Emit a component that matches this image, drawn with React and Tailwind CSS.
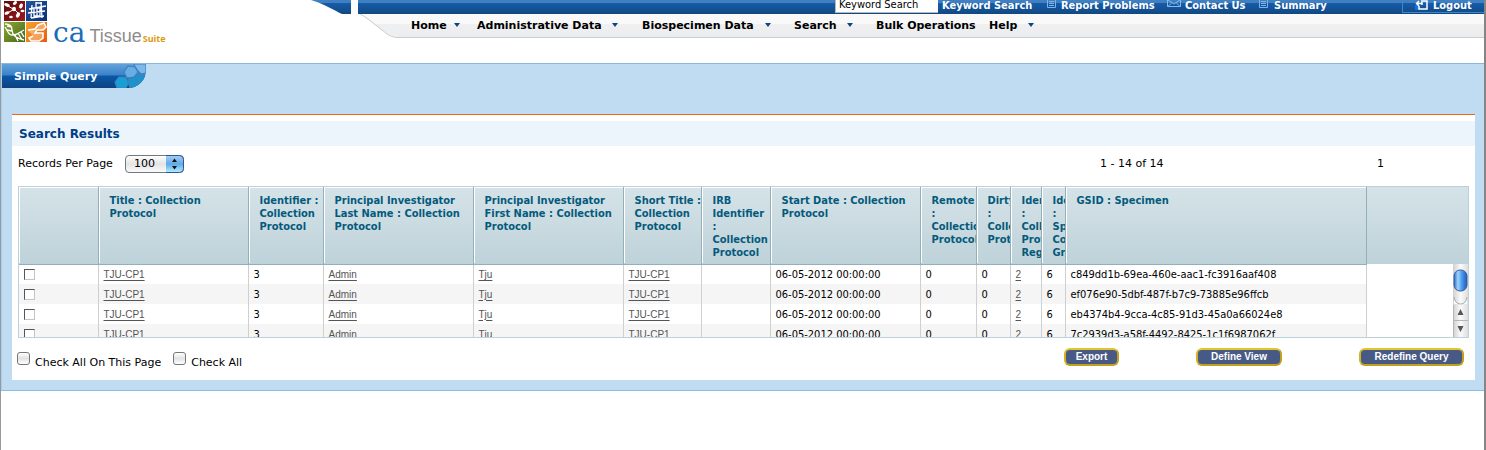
import React from "react";

const columns = [
  { label: "", width: "w-[79px]" },
  { label: "Title : Collection Protocol", width: "w-[150px]" },
  { label: "Identifier : Collection Protocol", width: "w-[75px]" },
  { label: "Principal Investigator Last Name : Collection Protocol", width: "w-[150px]" },
  { label: "Principal Investigator First Name : Collection Protocol", width: "w-[150px]" },
  { label: "Short\u00a0Title\u00a0: Collection Protocol", width: "w-[78px]" },
  { label: "IRB Identifier : Collection Protocol", width: "w-[69px]" },
  { label: "Start Date : Collection Protocol", width: "w-[150px]" },
  { label: "Remote : Collection Protocol", width: "w-[56px]" },
  { label: "Dirty : Collection Protocol", width: "w-[34px]" },
  { label: "Identifier : Collection Protocol Registration", width: "w-[31px]" },
  { label: "Identifier : Specimen Collection Group", width: "w-[24px]" },
  { label: "GSID : Specimen", width: "w-[301px]" },
];

const gsids = [
  "c849dd1b-69ea-460e-aac1-fc3916aaf408",
  "ef076e90-5dbf-487f-b7c9-73885e96ffcb",
  "eb4374b4-9cca-4c85-91d3-45a0a66024e8",
  "7c2939d3-a58f-4492-8425-1c1f6987062f",
];

const linked = new Set([0, 2, 3, 4, 9]);

const barBg = "bg-[linear-gradient(to_bottom,#4080c0_0px,#4080c0_3px,#165cab_3px,#124880_14px)]";

function Caret() {
  return (
    <svg viewBox="0 0 6 4" className="mt-[4px] h-[4px] w-[6px] shrink-0" aria-hidden="true">
      <path d="M0 0h6L3 4z" fill="#0b4680" />
    </svg>
  );
}

function PageIcon() {
  return (
    <svg viewBox="0 0 10 8" className="h-[8px] w-[10px] shrink-0" aria-hidden="true">
      <path d="M.5 0v7.500h8V0M2 1.500h5M2 3.500h5M2 5.500h5" fill="none" stroke="#7fb2e6" />
    </svg>
  );
}

function MailIcon() {
  return (
    <svg viewBox="0 0 14 7" className="h-[7px] w-[14px] shrink-0" aria-hidden="true">
      <path d="M.5 0v6.500h13V0M1 0l6 4 6-4M1 6.500l4-4M13 6.500l-4-4" fill="none" stroke="#8ab8e8" />
    </svg>
  );
}

function Logo() {
  return (
    <svg viewBox="0 0 44 42" className="h-[42px] w-[44px] shrink-0" aria-hidden="true">
      <defs>
        <linearGradient id="lr" x2="1" y2="1"><stop stopColor="#5a0a0c" /><stop offset="1" stopColor="#9c1a1c" /></linearGradient>
        <linearGradient id="lb" x2="1" y2="1"><stop stopColor="#1d56a8" /><stop offset="1" stopColor="#0c2f70" /></linearGradient>
        <linearGradient id="lg" x2="1" y2="1"><stop stopColor="#8aa832" /><stop offset="1" stopColor="#47681a" /></linearGradient>
        <linearGradient id="lo" x2="1" y2="1"><stop stopColor="#f8a32c" /><stop offset="1" stopColor="#e85a10" /></linearGradient>
      </defs>
      <rect x="1" y="1" width="21" height="20" fill="url(#lr)" />
      <rect x="23" y="1" width="21" height="20" fill="url(#lb)" />
      <rect x="1" y="22" width="21" height="20" fill="url(#lg)" />
      <rect x="23" y="22" width="21" height="20" fill="url(#lo)" />
      <g fill="#fff">
        <ellipse cx="4" cy="5" rx="3" ry="1.600" transform="rotate(25 4 5)" />
        <ellipse cx="12" cy="3" rx="2.300" ry="1.500" transform="rotate(-40 12 3)" />
        <ellipse cx="18" cy="6" rx="1.800" ry="2.600" transform="rotate(20 18 6)" />
        <ellipse cx="11" cy="9" rx="2" ry="2.300" />
        <ellipse cx="4" cy="13" rx="2.600" ry="1.600" transform="rotate(-20 4 13)" />
        <ellipse cx="15" cy="15" rx="1.800" ry="2.800" transform="rotate(30 15 15)" />
        <ellipse cx="19.500" cy="11" rx="2" ry="1.300" />
        <ellipse cx="8" cy="17" rx="1.800" ry="1.300" />
      </g>
      <path d="M5 6l5 3M6 12l4-2M12 10l3 3" stroke="#fff" fill="none" />
      <path d="M29 5l-1 13M33 2v5M38 2l1 16M33 3h6M26 9l17-3M25 13l17-2M31 8h6v8h-6zM34 8v8M28 18l13-2" stroke="#fff" fill="none" strokeWidth="1.300" />
      <path d="M2 24c5 0 7 2 7 6s3 8 12 10M2 27c3 5 4 9 9 8s6-3 10-5M4 26l5 1M4 30l5 1M12 35l3 6M15 33l4 7M18 32l3 5" stroke="#fff" fill="none" strokeWidth="1.300" />
      <path d="M25 30l7-1 3-4 6-2 2 4-3 3h-6l-2 3h8v5l-4 3h-8l-2-3 4-2" stroke="#fff" fill="#f5d2a8" fillOpacity=".5" strokeWidth="1.500" />
    </svg>
  );
}

function NavItem({ label, width, menu }) {
  return (
    <li className={"flex shrink-0 " + width}>
      <a href="#" className="flex w-full items-start justify-between leading-[14px]">
        {label}
        {menu && <Caret />}
      </a>
    </li>
  );
}

function TopBar() {
  return (
    <header className="flex h-[63px] items-start bg-white">
      <div className="flex w-[310px] shrink-0 items-start pl-[2px]">
        <Logo />
        <div className="flex items-baseline pl-[6px] pt-[18px] leading-[30px]">
          <span className="font-['DejaVu_Serif',serif] text-[28px] text-[#1b6cb8]">ca</span>
          <span className="pl-[4px] font-['Liberation_Sans',sans-serif] text-[18px] text-[#8d8d8d]">Tissue</span>
          <span className="pl-[1px] font-['Open_Sans',sans-serif] text-[9px] font-bold text-[#dc9a10]">Suite</span>
        </div>
      </div>
      <svg viewBox="0 0 40 14" className="h-[14px] w-[40px] shrink-0" aria-hidden="true">
        <defs>
          <linearGradient id="bar" x2="0" y2="1">
            <stop stopColor="#4080c0" /><stop offset=".21" stopColor="#4080c0" />
            <stop offset=".22" stopColor="#165cab" /><stop offset="1" stopColor="#124880" />
          </linearGradient>
        </defs>
        <path d="M0 0h40v14H31C24 11 14 4 0 0z" fill="url(#bar)" />
      </svg>
      <div className="ml-[7px] min-w-0 flex-1">
        <div className={"flex h-[14px] items-start justify-end text-[11px] font-bold leading-[11px] text-white " + barBg}>
          <input
            type="text"
            aria-label="Keyword Search"
            defaultValue="Keyword Search"
            className="h-[13px] w-[103px] shrink-0 border-b border-l border-[#b8b8b8] bg-white px-[3px] pb-[3px] font-['DejaVu_Sans_Condensed','DejaVu_Sans',sans-serif] text-[11px] font-normal text-black"
          />
          <div className="flex shrink-0 items-start whitespace-nowrap font-['DejaVu_Sans_Condensed','DejaVu_Sans',sans-serif]">
            <a href="#" className="w-[109px] pl-[4px]">Keyword Search</a>
            <a href="#" className="flex w-[120px] items-start gap-[4px]"><PageIcon />Report Problems</a>
            <a href="#" className="flex w-[92px] items-start gap-[4px]"><MailIcon />Contact Us</a>
            <a href="#" className="flex w-[143px] items-start gap-[5px]"><PageIcon />Summary</a>
            <button type="button" className="flex h-[13px] w-[82px] items-start gap-[5px] border-b border-l border-[#3c86cc] pl-[12px] font-bold leading-[11px]">
              <svg viewBox="0 0 13 10" className="h-[10px] w-[13px]" aria-hidden="true">
                <path d="M0 5h4v5H0z" fill="#1672e0" />
                <path d="M8 1h4v8H4V6M7 0v5M1.500 3.500h6M4 1L1.500 3.500 4 6" stroke="#fff" strokeWidth="1.500" fill="none" />
              </svg>
              Logout
            </button>
          </div>
        </div>
        <nav aria-label="Main" className="flex h-[24px] text-[11px] font-bold text-black">
          <svg viewBox="0 0 40 24" className="h-[24px] w-[40px] shrink-0" aria-hidden="true">
            <path d="M2 0h38v10H15z" fill="#f9f9f9" />
            <path d="M15 10h25v13H38q-4 0-8-3z" fill="#eeeff0" />
            <path d="M2 0q6 3 12 8l15 12q4 3 9 3.500h2" stroke="#cdcdcd" fill="none" />
          </svg>
          <ul className="flex min-w-0 flex-1 items-start border-b border-[#cbcccd] bg-[linear-gradient(to_bottom,#f9f9f9_0px,#f9f9f9_10px,#f0f0f1_10px,#ebecee_23px)] pl-[13px] pt-[5px]">
            <NavItem label="Home" width="mr-[17px] w-[49px]" menu />
            <NavItem label="Administrative Data" width="mr-[24px] w-[141px]" menu />
            <NavItem label="Biospecimen Data" width="mr-[23px] w-[129px]" menu />
            <NavItem label="Search" width="mr-[23px] w-[59px]" menu />
            <NavItem label="Bulk Operations" width="w-[113px]" />
            <NavItem label="Help" width="w-[45px]" menu />
          </ul>
        </nav>
      </div>
    </header>
  );
}

function PageTab() {
  return (
    <div className="flex h-[24px] w-[144px] items-center justify-between overflow-hidden rounded-br-[18px] bg-[linear-gradient(to_bottom,#62a2dc_0px,#3b82c8_11px,#0a57a8_12px,#0d4280_24px)] pl-[12px]">
      <h1 className="whitespace-nowrap pt-[2px] text-[11px] font-bold text-white">Simple Query</h1>
      <svg viewBox="0 0 32 24" className="h-[24px] w-[32px] shrink-0" aria-hidden="true">
        <g strokeWidth="1.200" stroke="#3f80bf">
          <path d="M10 8l4-6 7 1 3 5-4 5-7 1z" fill="#68aee4" />
          <path d="M24 7l-4-6V0h12v9l-5 1z" fill="#7db8ea" />
          <path d="M1 18l4-5h6l4 5-3 6H3z" fill="#18a0d4" />
          <path d="M14 18l1-4 5-1 4-3 6 1v7l-5 6h-9z" fill="#1b94cc" />
          <path d="M20 13l4 4-2 7" fill="none" />
        </g>
      </svg>
    </div>
  );
}

function ResultsTable() {
  return (
    <div className="relative mx-[6px] mt-[13px] h-[152px] overflow-hidden border border-[#bdd1da]">
      <table className="w-full table-fixed border-collapse text-left font-['DejaVu_Sans_Condensed','DejaVu_Sans',sans-serif] text-[11px] text-black">
        <colgroup>
          {columns.map((c, i) => <col key={i} className={c.width} />)}
          <col />
        </colgroup>
        <thead>
          <tr className="bg-[linear-gradient(to_bottom,#d5e3e8,#bed2d9)]">
            {columns.map((c, i) => (
              <th key={i} scope="col" className="h-[77px] overflow-hidden border-b border-r border-[#93afb8] p-0 align-top font-bold text-[#045a7c]">
                <div className="h-[76px] overflow-hidden border-l border-t border-white pl-[10px] pt-[6px] leading-[13px]">{c.label}</div>
              </th>
            ))}
            <td className="h-[77px] p-0" />
          </tr>
        </thead>
        <tbody>
          {gsids.map((gsid, r) => {
            const cells = ["TJU-CP1", "3", "Admin", "Tju", "TJU-CP1", "", "06-05-2012 00:00:00", "0", "0", "2", "6", gsid];
            return (
              <tr key={gsid} className="group h-[20px]">
                <td className="h-[20px] border-r border-[#cfcfcf] p-0 pl-[5px] group-even:bg-[#f5f5f5]">
                  <input type="checkbox" aria-label={"Select record " + (r + 1)} className="block h-[11px] w-[11px] appearance-none border border-b-[#c4c4c4] border-l-[#555] border-r-[#c4c4c4] border-t-[#555] bg-white" />
                </td>
                {cells.map((value, i) => (
                  <td key={i} className="h-[20px] overflow-hidden whitespace-nowrap border-r border-[#cfcfcf] p-0 pl-[5px] leading-[19px] group-even:bg-[#f5f5f5]">
                    {linked.has(i) ? (
                      <a href="#" className="font-['Liberation_Sans',sans-serif] text-[10px] text-[#555] underline underline-offset-2">{value}</a>
                    ) : value}
                  </td>
                ))}
                <td className="p-0" />
              </tr>
            );
          })}
        </tbody>
      </table>
      <svg viewBox="0 0 15 73" className="absolute bottom-0 right-0 h-[73px] w-[15px]" aria-hidden="true">
        <defs>
          <linearGradient id="track"><stop stopColor="#cfcfcf" /><stop offset=".5" stopColor="#fafafa" /><stop offset="1" stopColor="#dedede" /></linearGradient>
          <linearGradient id="thumb"><stop stopColor="#2468c8" /><stop offset=".3" stopColor="#a4d4fc" /><stop offset=".6" stopColor="#4a9af0" /><stop offset="1" stopColor="#2258b8" /></linearGradient>
        </defs>
        <rect width="15" height="73" fill="url(#track)" />
        <path d="M1 33q1 7 6.500 7t6.500-7v7H1z" fill="#fff" />
        <path d="M1 33q1 7 6.500 7t6.500-7" fill="none" stroke="#aaa" />
        <rect x="1" y="6" width="13" height="21" rx="6" fill="url(#thumb)" stroke="#3a5f9c" />
        <rect x="0" y="41" width="15" height="32" fill="url(#track)" />
        <path d="M0 56.500h15M.5 41v32" stroke="#b5b5b5" />
        <path d="M4.500 51h6l-3-6zM4.500 62h6l-3 6z" fill="#555" />
      </svg>
    </div>
  );
}

function Check({ label }) {
  return (
    <label className="flex items-start gap-[5px]">
      <input type="checkbox" className="h-[13px] w-[13px] appearance-none rounded-[3px] border border-[#777] bg-[linear-gradient(to_bottom,#fff,#e2e2e2_50%,#fff)]" />
      <span className="pt-[4px] leading-[14px]">{label}</span>
    </label>
  );
}

function GoldButton({ label, width }) {
  return (
    <button type="button" className={"h-[18px] shrink-0 rounded-[6px] border-2 border-b-[#c2a01c] border-l-[#d4b224] border-r-[#c2a01c] border-t-[#e2c42c] bg-[#475a85] font-['Liberation_Sans',sans-serif] text-[10px] font-bold leading-[14px] text-white " + width}>
      {label}
    </button>
  );
}

export default function App() {
  return (
    <div className="min-h-screen border-l border-r-2 border-l-[#999] border-r-[#858585] bg-white font-['DejaVu_Sans',sans-serif] text-[11px] text-black">
      <TopBar />
      <main className="border-y border-l border-b-[#8fbce6] border-l-[#a5cdef] border-t-[#8db5d8] bg-[#c0dcf2] pb-[10px]">
        <PageTab />
        <section className="ml-[10px] mr-[9px] mt-[26px] border-t border-[#f0690f] bg-white pb-[10px] pt-[6px]">
          <h2 className="bg-[#edf5fc] pl-[7px] pt-[1px] text-[12px] font-bold leading-[24px] text-[#003e86]">Search Results</h2>
          <div className="flex items-center pl-[6px] pt-[9px]">
            <label htmlFor="per-page" className="w-[107px] shrink-0 whitespace-nowrap">Records Per Page</label>
            <div className="relative w-[59px] shrink-0">
              <select id="per-page" defaultValue="100" className="block h-[18px] w-full appearance-none rounded-[4px] border border-[#707880] bg-[linear-gradient(to_bottom,#fff,#e4e4e4_50%,#fafafa)] pl-[8px] text-[11px] leading-[14px] text-black">
                <option>50</option>
                <option>100</option>
                <option>500</option>
              </select>
              <svg viewBox="0 0 18 18" className="pointer-events-none absolute right-0 top-0 h-[18px] w-[18px]" aria-hidden="true">
                <defs>
                  <linearGradient id="cap" x2="0" y2="1"><stop stopColor="#a8cdf4" /><stop offset=".5" stopColor="#62a8ea" /><stop offset="1" stopColor="#b0f0ff" /></linearGradient>
                </defs>
                <path d="M0 .5h13.500q4 0 4 4v9q0 4-4 4H0z" fill="url(#cap)" />
                <path d="M0 .5h13.500q4 0 4 4v9q0 4-4 4H0" fill="none" stroke="#33558f" />
                <path d="M6 7h5L8.500 3.500zM6 11h5l-2.500 3.500z" fill="#111" />
              </svg>
            </div>
            <div className="flex-1" />
            <span className="w-[277px] shrink-0">1 - 14 of 14</span>
            <a href="#" className="w-[98px] shrink-0">1</a>
          </div>
          <ResultsTable />
          <div className="flex items-start pl-[5px] pr-[11px] pt-[10px]">
            <div className="flex gap-[12px] pt-[4px]">
              <Check label="Check All On This Page" />
              <Check label="Check All" />
            </div>
            <div className="flex-1" />
            <div className="flex gap-[77px]">
              <GoldButton label="Export" width="w-[55px]" />
              <GoldButton label="Define View" width="w-[86px]" />
              <GoldButton label="Redefine Query" width="w-[105px]" />
            </div>
          </div>
        </section>
      </main>
    </div>
  );
}
